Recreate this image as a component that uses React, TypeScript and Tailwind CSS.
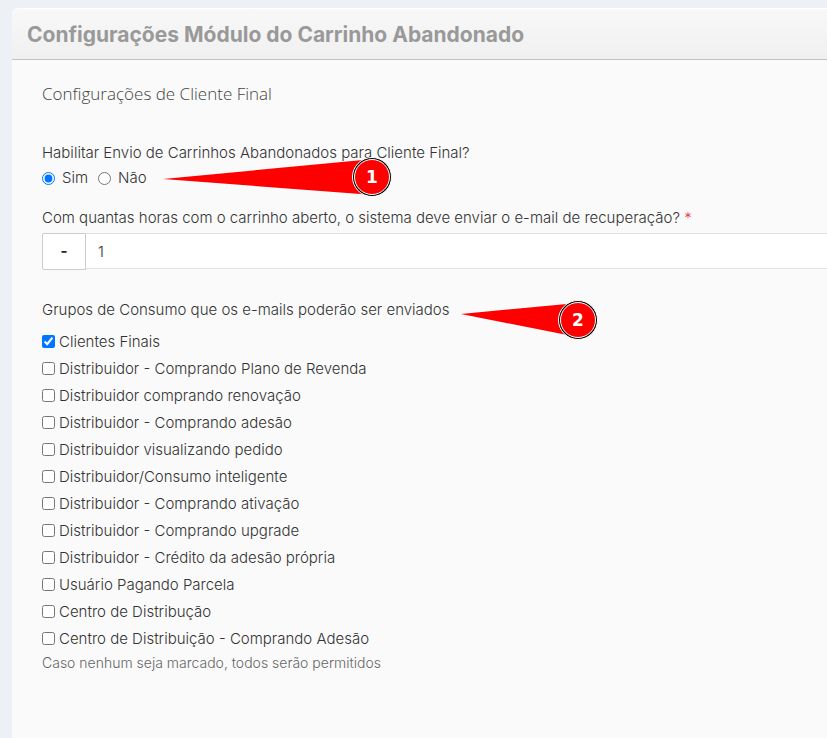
import { useState } from "react";
import clsx from "clsx";

type CalloutProps = {
  number: number;
  tail: string;
  tailHeight: number;
  className?: string;
};

const initialGroups = [
  { id: "clientes-finais", label: "Clientes Finais", checked: true },
  { id: "plano-revenda", label: "Distribuidor - Comprando Plano de Revenda", checked: false },
  { id: "renovacao", label: "Distribuidor comprando renovação", checked: false },
  { id: "adesao", label: "Distribuidor - Comprando adesão", checked: false },
  { id: "pedido", label: "Distribuidor visualizando pedido", checked: false },
  { id: "consumo", label: "Distribuidor/Consumo inteligente", checked: false },
  { id: "ativacao", label: "Distribuidor - Comprando ativação", checked: false },
  { id: "upgrade", label: "Distribuidor - Comprando upgrade", checked: false },
  { id: "credito", label: "Distribuidor - Crédito da adesão própria", checked: false },
  { id: "parcela", label: "Usuário Pagando Parcela", checked: false },
  { id: "centro", label: "Centro de Distribução", checked: false },
  { id: "centro-adesao", label: "Centro de Distribuição - Comprando Adesão", checked: false },
];

function Callout({ number, tail, tailHeight, className }: CalloutProps) {
  return (
    <div className={clsx("pointer-events-none absolute flex items-center justify-end", className)}>
      <svg
        className="absolute inset-0 h-full w-full"
        preserveAspectRatio="none"
        viewBox={`0 0 100 ${tailHeight}`}
        aria-hidden="true"
      >
        <polygon points={tail} fill="#fe0000" />
      </svg>
      <span className="relative flex size-10 items-center justify-center rounded-full border border-white bg-black p-px">
        <span className="flex size-full items-center justify-center rounded-full border border-white bg-[#fe0000] pt-px font-['DejaVu_Sans',sans-serif] text-[17px] font-bold text-white">
          {number}
        </span>
      </span>
    </div>
  );
}

export default function App() {
  const [enabled, setEnabled] = useState(true);
  const [hours, setHours] = useState(1);
  const [groups, setGroups] = useState(initialGroups);

  function toggleGroup(id: string) {
    setGroups(groups.map((g) => (g.id === id ? { ...g, checked: !g.checked } : g)));
  }

  return (
    <main className="min-h-screen overflow-hidden bg-[#edf0f5] pt-2 pl-3 font-[Inter,sans-serif] text-[15px] font-light text-[#333333]">
      <section className="min-h-screen rounded-tl-md bg-[#fafafa]">
        <header className="flex h-[52px] items-center rounded-tl-md border-t border-b border-t-white border-b-[#c2c2c2] bg-linear-to-b from-[#f8f8f8] to-[#f0f0f0] px-[15px] pt-0.5">
          <h1 className="text-[21px] font-bold whitespace-nowrap text-[#999999]">
            Configurações Módulo do Carrinho Abandonado
          </h1>
        </header>

        <form className="pt-5 pl-[30px]">
          <h2 className="font-['Open_Sans',sans-serif] text-[17px] leading-7 font-light text-[#444444]">
            Configurações de Cliente Final
          </h2>

          <fieldset className="relative mt-[35px]">
            <legend className="leading-5 whitespace-nowrap">
              Habilitar Envio de Carrinhos Abandonados para Cliente Final?
            </legend>
            <div className="flex h-[30px] items-center gap-2.5">
              <label className="flex items-center gap-[7px]">
                <input
                  type="radio"
                  name="enabled"
                  className="size-[13px]"
                  checked={enabled}
                  onChange={() => setEnabled(true)}
                />
                Sim
              </label>
              <label className="flex items-center gap-[7px]">
                <input
                  type="radio"
                  name="enabled"
                  className="size-[13px]"
                  checked={!enabled}
                  onChange={() => setEnabled(false)}
                />
                Não
              </label>
            </div>
            <Callout
              number={1}
              tail="0,22 92,2 92,38"
              tailHeight={40}
              className="-top-1.5 left-[121px] h-10 w-[229px]"
            />
          </fieldset>

          <div className="mt-[15px]">
            <label htmlFor="hours" className="block leading-5 whitespace-nowrap">
              Com quantas horas com o carrinho aberto, o sistema deve enviar o e-mail de recuperação?{" "}
              <span className="text-[#f0334b]">*</span>
            </label>
            <div className="mt-[5px] flex h-[37px]">
              <button
                type="button"
                className="w-11 shrink-0 rounded-l-xs border border-[#cccccc] bg-white font-bold text-[#222222]"
                onClick={() => setHours(Math.max(0, hours - 1))}
              >
                -
              </button>
              <input
                id="hours"
                type="text"
                inputMode="numeric"
                className="h-9 min-w-0 flex-1 border-y border-[#e1e1e1] bg-white px-3 outline-none"
                value={hours}
                onChange={(e) => setHours(Number(e.target.value) || 0)}
              />
            </div>
          </div>

          <fieldset className="relative mt-[30px]">
            <legend className="leading-5 whitespace-nowrap">
              Grupos de Consumo que os e-mails poderão ser enviados
            </legend>
            <ul className="pt-[9px]">
              {groups.map((group) => (
                <li key={group.id} className="flex h-[27px] items-center">
                  <label className="flex items-center gap-1">
                    <input
                      type="checkbox"
                      className="mb-0.5 size-[13px]"
                      checked={group.checked}
                      onChange={() => toggleGroup(group.id)}
                    />
                    {group.label}
                  </label>
                </li>
              ))}
            </ul>
            <p className="text-sm leading-5 text-[#666666]">
              Caso nenhum seja marcado, todos serão permitidos
            </p>
            <Callout
              number={2}
              tail="0,14 85,3 85,37"
              tailHeight={40}
              className="-top-5 left-[419px] h-10 w-[137px]"
            />
          </fieldset>
        </form>
      </section>
    </main>
  );
}
